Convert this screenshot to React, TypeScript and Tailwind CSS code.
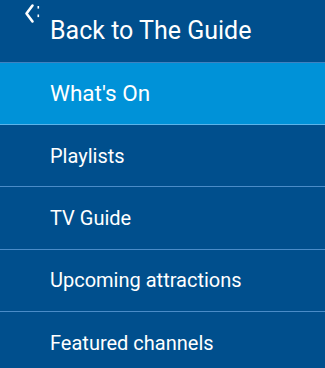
const items = [
  { label: "What's On", active: true },
  { label: "Playlists" },
  { label: "TV Guide" },
  { label: "Upcoming attractions" },
  { label: "Featured channels" },
]

export default function App() {
  return (
    <div
      className="w-[325px] h-[368px] overflow-hidden bg-[#004f8d] text-white"
      style={{ fontFamily: "Roboto, 'Noto Sans', sans-serif" }}
    >
      {/* back link */}
      <div className="relative flex h-[62.5px] items-center border-b border-[#3f82c0] pl-[50px]">
        <svg
          className="absolute left-[24px] top-[3px]"
          width="16"
          height="22"
          viewBox="0 0 16 22"
          fill="none"
        >
          <path d="M8.5 2.5 L2.5 10.5 L8.5 18.5" stroke="white" strokeWidth="2.6" strokeLinecap="round" strokeLinejoin="round" />
          <rect x="13.5" y="3" width="1.6" height="2.6" fill="white" />
          <rect x="13.5" y="11.5" width="1.6" height="2.6" fill="white" />
        </svg>
        <span className="text-[25px] leading-none">Back to The Guide</span>
      </div>

      <nav className="flex flex-col">
        {items.map((item) => (
          <a
            key={item.label}
            href="#"
            className={
              item.active
                ? "flex h-[62.4px] items-center border-b border-[#5ab4ea] bg-[#0092d8] pl-[50px] text-[22.5px] leading-none"
                : "flex h-[62.4px] items-center border-b border-[#4a8cc8] pl-[50px] text-[20px] leading-none"
            }
          >
            {item.label}
          </a>
        ))}
      </nav>
    </div>
  )
}
